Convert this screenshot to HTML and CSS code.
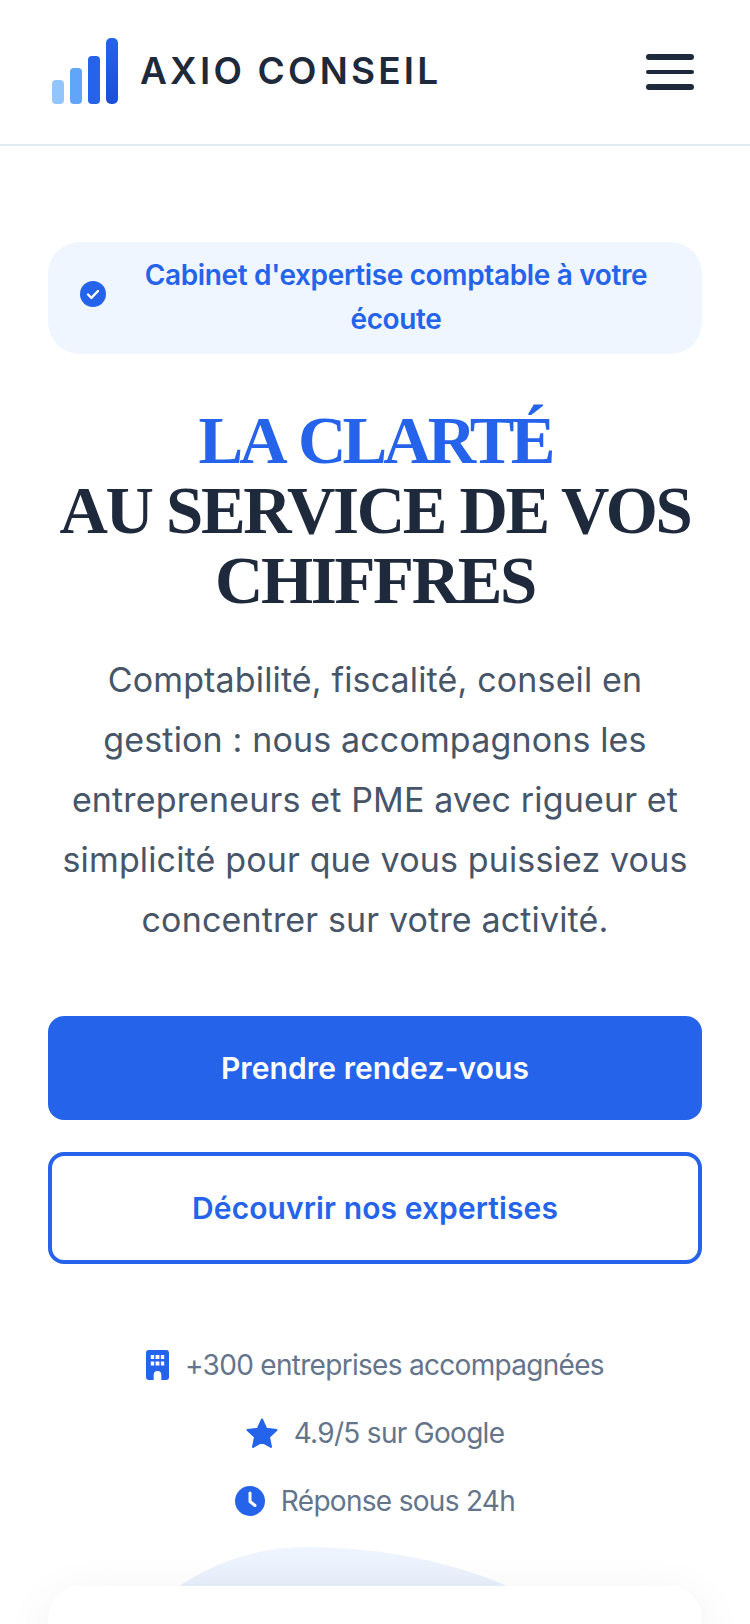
FILE: index.html
```html
<!DOCTYPE html>
<html lang="fr">
<head>
<meta charset="utf-8">
<title>Axio Conseil</title>
<link rel="stylesheet" href="styles.css">
</head>
<body>
<header class="header">
  <div class="brand">
    <svg class="logo" width="66" height="66" viewBox="0 0 66 66" aria-hidden="true">
      <defs>
        <linearGradient id="g" x1="0" y1="0" x2="0" y2="1"><stop offset="0" stop-color="#2563eb"/><stop offset="1" stop-color="#1d4ed8"/></linearGradient>
      </defs>
      <rect x="0" y="42" width="12" height="24" rx="4" fill="#93c5fd"/>
      <rect x="18" y="30" width="12" height="36" rx="4" fill="#60a5fa"/>
      <rect x="36" y="18" width="12" height="48" rx="4" fill="#2563eb"/>
      <rect x="54" y="0" width="12" height="66" rx="5" fill="url(#g)"/>
    </svg>
    <span class="brand-name">AXIO CONSEIL</span>
  </div>
  <div class="burger" aria-label="Menu"><i></i><i></i><i></i></div>
</header>
<main class="hero">
  <div class="badge">
    <svg class="badge-icon" width="26" height="26" viewBox="0 0 26 26" aria-hidden="true">
      <circle cx="13" cy="13" r="13" fill="#2563eb"/>
      <path d="M8 13.500l3.400 3.400L18 10" fill="none" stroke="#fff" stroke-width="2.400" stroke-linecap="round" stroke-linejoin="round"/>
    </svg>
    <span class="badge-text">Cabinet d'expertise comptable à votre écoute</span>
  </div>
  <h1 class="title"><span class="accent">LA CLARTÉ</span><br>AU SERVICE DE VOS CHIFFRES</h1>
  <p class="lead">Comptabilité, fiscalité, conseil en gestion : nous accompagnons les entrepreneurs et PME avec rigueur et simplicité pour que vous puissiez vous concentrer sur votre activité.</p>
  <div class="actions">
    <a class="btn btn-primary">Prendre rendez-vous</a>
    <a class="btn btn-outline">Découvrir nos expertises</a>
  </div>
  <ul class="stats">
    <li class="stat">
      <svg width="23" height="30" viewBox="0 0 24 30" preserveAspectRatio="none" aria-hidden="true"><path fill="#2563eb" fill-rule="evenodd" d="M3 0h18a3 3 0 0 1 3 3v24a3 3 0 0 1-3 3h-5v-5a4 4 0 0 0-8 0v5H3a3 3 0 0 1-3-3V3a3 3 0 0 1 3-3zM5 5v4h3.500V5zM10 5v4h4V5zM15.500 5v4H19V5zM5 11.500v4h3.500v-4zM10 11.500v4h4v-4zM15.500 11.500v4H19v-4z"/></svg>
      <span>+300 entreprises accompagnées</span>
    </li>
    <li class="stat">
      <svg width="32" height="30" viewBox="0 0 32 30" aria-hidden="true"><path fill="#2563eb" stroke="#2563eb" stroke-width="2" stroke-linejoin="round" d="M16 1.500l4.300 9.300 10.200 1.200-7.500 7 2 10-9-5-9 5 2-10-7.500-7 10.200-1.200z"/></svg>
      <span>4.9/5 sur Google</span>
    </li>
    <li class="stat">
      <svg width="30" height="30" viewBox="0 0 30 30" aria-hidden="true"><circle cx="15" cy="15" r="15" fill="#2563eb"/><path d="M15 7v8.500l5 4" fill="none" stroke="#fff" stroke-width="3" stroke-linecap="round" stroke-linejoin="round"/></svg>
      <span>Réponse sous 24h</span>
    </li>
  </ul>
  <div class="visual">
    <div class="blob"></div>
    <div class="card"></div>
  </div>
</main>
</body>
</html>
```
FILE: styles.css
```css
* { box-sizing: border-box; }
html, body { margin: 0; padding: 0; background: #fff; }
body { font-family: "Inter", "Noto Sans", sans-serif; color: #1e293b; }

.header {
  height: 146px;
  border-bottom: 2px solid #e2eaf2;
  padding: 0 56px 0 52px;
  display: flex;
  align-items: center;
  justify-content: space-between;
}
.brand { display: flex; align-items: center; gap: 22px; margin-top: -2px; }
.logo { display: block; }
.brand-name { font-size: 37px; font-weight: 600; letter-spacing: 3.200px; color: #1e293b; line-height: 1; margin-top: -1px; }
.burger { display: flex; flex-direction: column; gap: 10px; width: 48px; }
.burger i { display: block; height: 6px; border-radius: 3px; background: #1e293b; }
.burger i:nth-child(2) { height: 4px; }

.hero { height: 1478px; overflow: hidden; padding: 96px 48px 0; display: flex; flex-direction: column; align-items: stretch; }
.badge {
  flex: none;
  height: 112px;
  background: #eff6ff;
  border-radius: 32px;
  padding: 0 32px;
  display: flex;
  align-items: center;
  gap: 16px;
}
.badge-icon { flex: none; margin-bottom: 8px; }
.badge-text { font-size: 28px; font-weight: 600; line-height: 44px; color: #2563eb; text-align: center; letter-spacing: -0.350px; padding-bottom: 2px; }

.title {
  margin: 51px 0 0;
  font-family: "Liberation Serif", serif;
  font-weight: 700;
  font-size: 67px;
  line-height: 70px;
  text-align: center;
  color: #1e293b;
  letter-spacing: -2.350px;
}
.accent { color: #2563eb; letter-spacing: -3.900px; word-spacing: 5px; }

.lead {
  margin: 35px 0 0;
  padding: 0 10px;
  font-size: 34px;
  line-height: 60px;
  color: #475569;
  text-align: center;
  letter-spacing: 0.150px;
}

.actions { flex: none; margin-top: 66px; display: flex; flex-direction: column; gap: 32px; }
.btn {
  display: flex;
  align-items: center;
  justify-content: center;
  border-radius: 16px;
  font-size: 30px;
  font-weight: 600;
  letter-spacing: 0.100px;
}
.btn-primary { height: 104px; background: #2563eb; color: #fff; }
.btn-outline { height: 112px; border: 4px solid #2563eb; color: #2563eb; background: #fff; }

.stats { flex: none; list-style: none; margin: 86px 0 0; padding: 0; display: flex; flex-direction: column; gap: 38px; }
.stat { display: flex; align-items: center; justify-content: center; gap: 16px; height: 30px; font-size: 28px; color: #64748b; letter-spacing: -0.700px; }
.stat svg { flex: none; display: block; }

.visual { flex: none; position: relative; margin-top: 70px; height: 200px; }
.blob {
  position: absolute;
  left: 26px;
  top: -39px;
  width: 600px;
  height: 400px;
  border-radius: 38.700% 61.300% 50% 50% / 60% 60% 40% 40%;
  background: linear-gradient(180deg, #eff5fe, #e6eefb 12%);
}
.card {
  position: absolute;
  inset: 0;
  background: #fff;
  border-radius: 32px;
  box-shadow: 0 10px 50px rgba(15, 23, 42, 0.06);
}
```
